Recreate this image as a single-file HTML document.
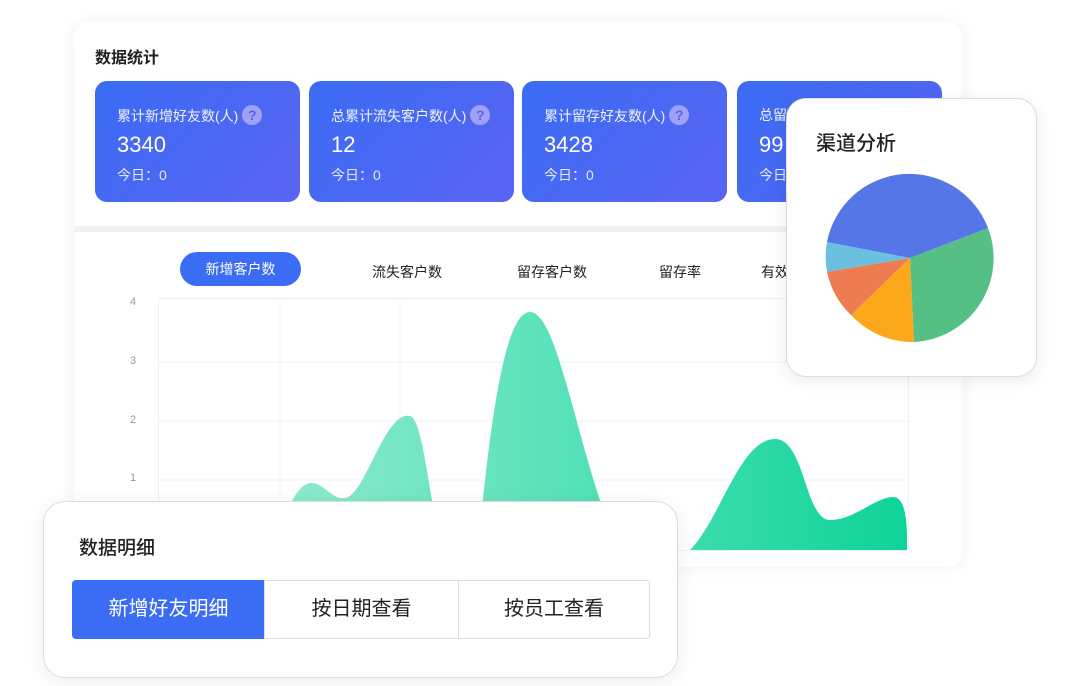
<!DOCTYPE html>
<html><head><meta charset="utf-8"><style>
*{margin:0;padding:0;box-sizing:border-box}
body{width:1080px;height:686px;background:#fff;position:relative;overflow:hidden;font-family:"Liberation Sans","Noto Sans CJK SC",sans-serif}
.main{position:absolute;left:74px;top:22px;width:888px;height:545px;background:#fff;border-radius:14px;box-shadow:0 0 18px rgba(0,0,0,0.06)}
.t1{position:absolute;left:95px;top:44px;font-size:16px;color:#222;font-weight:bold}
.card{position:absolute;top:81px;width:205px;height:121px;border-radius:12px;background:linear-gradient(135deg,#3a6cf4,#5a64f2);color:#fff}
.card .a{position:absolute;left:22px;top:24px;font-size:14px;opacity:.92}
.card .q{display:inline-block;width:20px;height:20px;border-radius:50%;background:#a6a7f5;color:#5a5ff0;font-weight:bold;font-size:14px;text-align:center;line-height:20px;vertical-align:1px;margin-left:4px}
.card .b{position:absolute;left:22px;top:51px;font-size:22px;font-weight:500}
.card .c{position:absolute;left:22px;top:84px;font-size:14px;opacity:.85}
.div{position:absolute;left:74px;top:226px;width:888px;height:6px;background:#f0f1f3}
.tab{position:absolute;top:262px;font-size:14px;color:#222}
.pill{position:absolute;left:180px;top:252px;width:121px;height:34px;border-radius:17px;background:#3a6cf4;color:#fff;font-size:14px;text-align:center;line-height:34px}
.yl{position:absolute;left:130px;font-size:11px;color:#999}
.pie{position:absolute;left:786px;top:98px;width:251px;height:279px;background:#fff;border:1px solid #ddd;border-radius:20px;box-shadow:0 4px 18px rgba(0,0,0,0.08)}
.det{position:absolute;left:43px;top:501px;width:635px;height:177px;background:#fff;border:1px solid #ddd;border-radius:22px;box-shadow:0 4px 20px rgba(0,0,0,0.07)}
.seg{position:absolute;top:580px;height:59px;border:1px solid #ddd;font-size:20px;text-align:center;line-height:57px;color:#222;background:#fff}
</style></head><body>
<div class="main"></div>
<div class="t1">数据统计</div>
<div class="card" style="left:95px"><div class="a">累计新增好友数(人)<span class="q">?</span></div><div class="b">3340</div><div class="c">今日：0</div></div>
<div class="card" style="left:309px"><div class="a">总累计流失客户数(人)<span class="q">?</span></div><div class="b">12</div><div class="c">今日：0</div></div>
<div class="card" style="left:522px"><div class="a">累计留存好友数(人)<span class="q">?</span></div><div class="b">3428</div><div class="c">今日：0</div></div>
<div class="card" style="left:737px"><div class="a">总留存</div><div class="b">99</div><div class="c">今日</div></div>
<div class="div"></div>
<div class="pill">新增客户数</div>
<div class="tab" style="left:372px">流失客户数</div>
<div class="tab" style="left:517px">留存客户数</div>
<div class="tab" style="left:659px">留存率</div>
<div class="tab" style="left:761px">有效</div>
<div class="yl" style="top:296px">4</div>
<div class="yl" style="top:355px">3</div>
<div class="yl" style="top:414px">2</div>
<div class="yl" style="top:472px">1</div>
<svg style="position:absolute;left:0;top:0" width="1080" height="686">
<defs><linearGradient id="g" gradientUnits="userSpaceOnUse" x1="260" y1="0" x2="910" y2="0"><stop offset="0" stop-color="#92ead0"/><stop offset="0.45" stop-color="#5ae2ba"/><stop offset="1" stop-color="#0dd398"/></linearGradient></defs>
<rect x="158.5" y="298.5" width="750" height="252" fill="none" stroke="#eef0f2"/>
<g stroke="#f2f3f5"><line x1="158" y1="362" x2="908" y2="362"/><line x1="158" y1="421" x2="908" y2="421"/><line x1="158" y1="480" x2="908" y2="480"/><line x1="280" y1="298" x2="280" y2="550"/><line x1="400" y1="298" x2="400" y2="550"/></g>
<path d="M270 550 C290 500 300 482 312 483 C325 484 332 500 345 498 C365 496 385 410 410 416 C425 420 430 520 445 550 Z" fill="url(#g)"/>
<path d="M478 550 C490 420 505 312 530 312 C560 312 580 470 620 550 Z" fill="url(#g)"/>
<path d="M620 550 L690 550 C720 520 740 439 775 439 C805 439 805 520 830 520 C855 520 875 497 893 497 C905 497 907 520 907 540 L907 550 Z" fill="url(#g)"/>
</svg>
<div class="pie"></div>
<div style="position:absolute;left:816px;top:127px;font-size:20px;color:#222;font-weight:500">渠道分析</div>
<svg style="position:absolute;left:0;top:0" width="1080" height="686">
<g transform="translate(910,258)">
<path d="M0 0 L78 -30 A84 84 0 0 1 4 84 Z" fill="#55bf84"/>
<path d="M0 0 L4 84 A84 84 0 0 1 -59 57 Z" fill="#fba81a"/>
<path d="M0 0 L-59 57 A84 84 0 0 1 -83 14 Z" fill="#ee7b52"/>
<path d="M0 0 L-83 14 A84 84 0 0 1 -83 -16 Z" fill="#6cc0df"/>
<path d="M0 0 L-83 -16 A84 84 0 0 1 78 -30 Z" fill="#5676e8"/>
</g></svg>
<div class="det"></div>
<div style="position:absolute;left:79px;top:533px;font-size:19px;color:#222;font-weight:500">数据明细</div>
<div class="seg" style="left:72px;width:193px;background:#3a6cf4;color:#fff;border-color:#3a6cf4;border-radius:4px 0 0 4px">新增好友明细</div>
<div class="seg" style="left:264px;width:195px">按日期查看</div>
<div class="seg" style="left:458px;width:192px;border-radius:0 4px 4px 0">按员工查看</div>
</body></html>
